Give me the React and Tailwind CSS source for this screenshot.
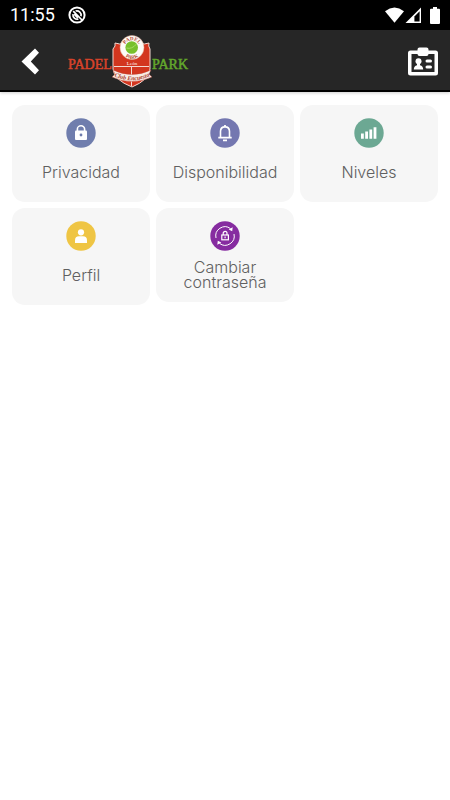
import React from "react";

function StatusBar() {
  return (
    <div className="flex h-[30px] items-center bg-black px-[10px] text-white">
      <span className="font-['Roboto',sans-serif] text-[18px] leading-[30px]">11:55</span>
      <svg viewBox="0 0 18 18" className="ml-[13px] h-[18px] w-[18px]" fill="none" stroke="currentColor">
        <circle cx="9" cy="9" r="7.6" strokeWidth="2" />
        <path d="M5 8.2 A4.3 4.3 0 0 0 10.4 13 M7.6 5 A4.3 4.3 0 0 1 13 10.2" strokeWidth="1.7" />
        <path d="M5.2 5.2 L14 14 M6.2 8.2 L9.8 11.8" strokeWidth="1.7" />
      </svg>
      <div className="ml-auto flex items-center">
        <svg viewBox="0 0 19 16" className="h-4 w-[19px]" fill="currentColor">
          <path d="M0 4.2 Q9.5 -3.2 19 4.2 L9.5 15.8 Z" />
        </svg>
        <svg viewBox="0 0 17 17" className="ml-px h-[17px] w-[17px]">
          <path d="M16 0.5 V16 H0.5 Z" fill="#fff" />
          <path d="M14.6 4.2 V14.4 H9.4 V9.4 Z" fill="#000" />
        </svg>
        <svg viewBox="0 0 10 17" className="ml-2 h-[17px] w-[10px]" fill="currentColor">
          <path d="M3 0 H7 V1.7 H9 Q10 1.7 10 2.7 V16 Q10 17 9 17 H1 Q0 17 0 16 V2.7 Q0 1.7 1 1.7 H3 Z" />
        </svg>
      </div>
    </div>
  );
}

function Logo() {
  return (
    <svg viewBox="0 0 124 56" className="h-14 w-[124px]" role="img" aria-label="Padel Park">
      <defs>
        <path id="arcTop" d="M55.8 14.5 A8.2 8.2 0 0 1 72.2 14.5" />
        <path id="arcBottom" d="M52.7 13.5 A11.3 11.3 0 0 0 75.3 13.5" />
        <path id="arcRibbon" d="M46 42 Q64 50.5 82 42" />
      </defs>
      <g fontFamily="'Liberation Serif', serif" fontSize="14" strokeWidth="0.5">
        <text x="0" y="35" fill="#d8432a" stroke="#d8432a">PADEL</text>
        <text x="84" y="35" fill="#63a82c" stroke="#63a82c">PARK</text>
      </g>
      <path
        d="M47 9 Q52 11 56 9 H72 Q76 11 81 9 Q80 12 82 15 V35 Q81 46 64 53 Q46 46 45 35 V15 Q48 12 47 9 Z"
        fill="#d3361f"
        stroke="#f3d9d2"
        strokeWidth="1"
      />
      <path d="M46 32.5 H81 M63.5 32.5 V52" stroke="#f3d9d2" strokeWidth="1" />
      <circle cx="64" cy="13.5" r="12" fill="#fdfbf6" stroke="#e3a58f" strokeWidth="0.5" />
      <circle cx="63.7" cy="13.5" r="6.3" fill="#78c02c" />
      <path d="M58.5 14 Q64 15.5 68.5 10" fill="none" stroke="#a5dc62" strokeWidth="1" />
      <g fontFamily="'Liberation Serif', serif" textAnchor="middle">
        <text fontSize="5" fontWeight="700" fill="#b3462e">
          <textPath href="#arcTop" startOffset="50%">PADEL</textPath>
        </text>
        <text fontSize="5" fontWeight="700" fill="#b3462e">
          <textPath href="#arcBottom" startOffset="50%">PARK</textPath>
        </text>
        <text x="64" y="30.5" fontSize="5" fill="#fff">León</text>
        <path
          d="M45 36 Q64 45 83 36 L81 40 L84 43 Q64 52 44 43 L47 40 Z"
          fill="#f7ece6"
          stroke="#b9402c"
          strokeWidth="0.4"
        />
        <text fontSize="6" fontStyle="italic" fontWeight="700" fill="#a83a28">
          <textPath href="#arcRibbon" startOffset="50%">Club Encuesta</textPath>
        </text>
      </g>
    </svg>
  );
}

function Header() {
  return (
    <header className="flex h-[62px] items-center border-b-2 border-black bg-[#262626] pt-[3px] pr-[11px] pl-[21px] shadow-[0_1px_3px_rgba(0,0,0,0.2)]">
      <button type="button" aria-label="Atrás" className="text-white">
        <svg viewBox="0 0 19 27" className="h-[27px] w-[19px]" fill="currentColor">
          <path d="M14 0.5 L18 4.8 L9.8 13.5 L18 22.2 L14 26.5 L0.5 13.5 Z" />
        </svg>
      </button>
      <div className="ml-7">
        <Logo />
      </div>
      <button type="button" aria-label="Carnet" className="ml-auto">
        <svg viewBox="0 0 32 30" className="h-[30px] w-8" fill="#fff">
          <path
            fillRule="evenodd"
            d="M3.5 3.5 H10.5 V2.5 Q10.5 0.5 12.5 0.5 H19.5 Q21.5 0.5 21.5 2.5 V3.5 H28.5 Q31 3.5 31 6 V26 Q31 28.5 28.5 28.5 H3.5 Q1 28.5 1 26 V6 Q1 3.5 3.5 3.5 Z M4.5 7 V25 H27.5 V7 H21.5 Q21.5 9 19.5 9 H12.5 Q10.5 9 10.5 7 Z"
          />
          <circle cx="11.5" cy="14.2" r="3" />
          <path d="M10 16 H13 V18.2 Q16.2 19 16.2 22.5 H6.8 Q6.8 19 10 18.2 Z" />
          <rect x="18.5" y="12.5" width="6.5" height="3" rx="1.5" />
          <rect x="18.5" y="18.5" width="6.5" height="3" rx="1.5" />
        </svg>
      </button>
    </header>
  );
}

const LockIcon = () => (
  <>
    <rect x="9" y="12.5" width="12" height="9.5" rx="1" fill="#fff" />
    <path d="M11.4 13 V11 A3.6 3.2 0 0 1 18.6 11 V13" fill="none" stroke="#fff" strokeWidth="1.6" />
    <circle cx="15" cy="17" r="1.4" fill="#6f7dad" />
  </>
);

const BellIcon = () => (
  <g fill="none" stroke="#fff" strokeWidth="1.6">
    <path d="M8.3 19.6 H21.7 M10.5 19.5 V13.5 Q10.5 8.9 15 8.9 Q19.5 8.9 19.5 13.5 V19.5" />
    <path d="M15 7 V9 M13 22.3 H17" strokeWidth="1.8" />
  </g>
);

const BarsIcon = () => (
  <path d="M7 15.5 H9.8 V20.8 H7 Z M11.2 13.5 H14 V20.8 H11.2 Z M15.4 11.5 H18.2 V20.8 H15.4 Z M19.6 9.2 H22.4 V20.8 H19.6 Z" fill="#fff" />
);

const UserIcon = () => (
  <g fill="#fff">
    <circle cx="15" cy="11.3" r="3.1" />
    <path d="M9 22 V19.5 Q9 15.3 13 15.3 H17 Q21 15.3 21 19.5 V22 Z" />
  </g>
);

const PasswordIcon = () => (
  <g fill="none" stroke="#fff">
    <path d="M6 17 A9.2 9.2 0 0 1 20.5 7.6 M24 13 A9.2 9.2 0 0 1 9.5 22.4" strokeWidth="1" />
    <path d="M22.7 6.3 L22.2 10.3 L18.7 8.5 Z M7.3 23.7 L7.8 19.7 L11.3 21.5 Z" fill="#fff" stroke="none" />
    <rect x="11.8" y="14" width="6.6" height="4.8" strokeWidth="1.2" />
    <path d="M13.2 14 V12.3 A1.9 1.9 0 0 1 17 12.3 V14 M15.1 15.6 V17.2" strokeWidth="1.2" />
  </g>
);

const OPTIONS = [
  { label: "Privacidad", color: "fill-[#6f7dad]", Icon: LockIcon },
  { label: "Disponibilidad", color: "fill-[#7477b0]", Icon: BellIcon },
  { label: "Niveles", color: "fill-[#6ca893]", Icon: BarsIcon },
  { label: "Perfil", color: "fill-[#efc544]", Icon: UserIcon },
  { label: "Cambiar contraseña", color: "fill-[#862ca0]", Icon: PasswordIcon, twoLines: true },
];

function OptionCard({ label, color, Icon, twoLines }) {
  return (
    <button
      type="button"
      className={`flex flex-col items-center rounded-[13px] bg-[#f6f6f6] px-3 pt-[13px] ${twoLines ? "pb-3" : "pb-[22px]"}`}
    >
      <svg viewBox="0 0 30 30" className="h-[30px] w-[30px]">
        <circle cx="15" cy="15" r="14.7" className={color} />
        <Icon />
      </svg>
      <span
        className={`text-center font-['Inter',sans-serif] text-[16px] leading-[15px] font-light text-[#606060] ${twoLines ? "mt-[9px]" : "mt-[17px]"}`}
      >
        {label}
      </span>
    </button>
  );
}

export default function App() {
  return (
    <div className="min-h-screen bg-white">
      <StatusBar />
      <Header />
      <main className="grid grid-cols-3 items-start gap-[6px] px-3 pt-[13px]">
        {OPTIONS.map((o) => (
          <OptionCard key={o.label} {...o} />
        ))}
      </main>
    </div>
  );
}
